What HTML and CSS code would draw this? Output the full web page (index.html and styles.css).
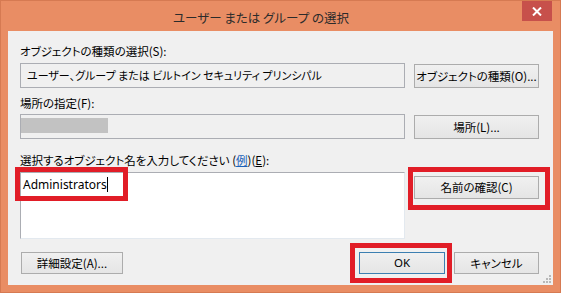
FILE: index.html
```html
<!DOCTYPE html>
<html>
<head>
<meta charset="utf-8">
<link rel="stylesheet" href="styles.css">
</head>
<body>
<div class="window">
    <div class="titlebar">
        <div class="title">ユーザー または グループ の選択</div>
        <div class="close">
            <svg width="10" height="9" viewBox="0 0 10 9"><path d="M1 0.5 L9 8.5 M9 0.5 L1 8.5" stroke="#fff" stroke-width="2"/></svg>
        </div>
    </div>
    <div class="client">
        <div class="label">オブジェクトの種類の選択(S):</div>
        <div class="row">
            <div class="textbox readonly">ユーザー、グループ または ビルトイン セキュリティ プリンシパル</div>
            <div class="btn wide">オブジェクトの種類(O)...</div>
        </div>

        <div class="label second">場所の指定(F):</div>
        <div class="row">
            <div class="textbox readonly"><span class="masked"></span></div>
            <div class="btn wide">場所(L)...</div>
        </div>

        <div class="label third">選択するオブジェクト名を入力してください (<a class="link">例</a>)(<u>E</u>):</div>
        <div class="row">
            <div class="textbox entry">Administrators<span class="caret"></span></div>
            <div class="btn wide check">名前の確認(C)</div>
        </div>

        <div class="footer">
            <div class="btn advanced">詳細設定(A)...</div>
            <div class="spacer"></div>
            <div class="btn ok">OK</div>
            <div class="btn cancel">キャンセル</div>
        </div>

        <svg class="grip" width="8" height="8" viewBox="0 0 8 8">
            <rect x="6" y="0" width="2" height="2" fill="#b8b8b8"/>
            <rect x="3" y="3" width="2" height="2" fill="#b8b8b8"/>
            <rect x="6" y="3" width="2" height="2" fill="#b8b8b8"/>
            <rect x="0" y="6" width="2" height="2" fill="#b8b8b8"/>
            <rect x="3" y="6" width="2" height="2" fill="#b8b8b8"/>
            <rect x="6" y="6" width="2" height="2" fill="#b8b8b8"/>
        </svg>

        <!-- annotation boxes -->
        <div class="mark mark-name"></div>
        <div class="mark mark-check"></div>
        <div class="mark mark-ok"></div>
    </div>
</div>
</body>
</html>
```

FILE: styles.css
```css
body {
    margin: 0;
    font-family: "Noto Sans CJK JP", "Noto Sans", sans-serif;
    font-size: 11.5px;
    font-feature-settings: "palt";
    color: #000;
}

.window {
    width: 561px;
    height: 293px;
    box-sizing: border-box;
    background: #e98d64;
    border: 1px solid #d67a52;
    padding: 0 7px 7px 7px;
    display: flex;
    flex-direction: column;
}

.titlebar {
    height: 30px;
    display: flex;
    position: relative;
}

.title {
    flex: 1;
    text-align: center;
    padding-top: 7px;
    padding-right: 8px;
    font-size: 12.5px;
    color: #2b2b2b;
}

.close {
    width: 30px;
    height: 20px;
    background: #c7504b;
    display: flex;
    align-items: center;
    justify-content: center;
    margin-right: 1px;
}

.client {
    flex: 1;
    background: #f0f0f0;
    padding: 13px 14px 0 12px;
    position: relative;
}

u {
    text-decoration: underline;
}

.label {
    height: 14px;
    line-height: 14px;
    margin-bottom: 5px;
}
.label.second {
    margin-top: 8px;
    margin-bottom: 4px;
}
.label.third {
    margin-top: 14px;
    margin-bottom: 5px;
}

.link {
    color: #1c62b9;
    text-decoration: underline;
}

.row {
    display: flex;
    gap: 9px;
    align-items: flex-start;
}

.textbox {
    width: 385px;
    height: 25px;
    box-sizing: border-box;
    border: 1px solid #abadb3;
    padding: 0 6px;
    line-height: 23px;
    white-space: nowrap;
}
.textbox.readonly {
    background: #f0f0f0;
    font-size: 11px;
}
.textbox.entry {
    background: #fff;
    height: 67px;
    padding: 3px 2px;
    line-height: 17px;
    font-family: "Noto Sans", sans-serif;
    font-size: 12px;
    border-color: #abadb3 #e3e9ef #e3e9ef #abadb3;
}

.masked {
    display: inline-block;
    width: 87px;
    height: 15px;
    margin-left: -6px;
    margin-top: 3px;
    vertical-align: top;
    background: #c2c2c2;
}

.caret {
    display: inline-block;
    width: 1px;
    height: 15px;
    background: #000;
    vertical-align: -3px;
}

.btn {
    box-sizing: border-box;
    height: 24px;
    border: 1px solid #acacac;
    background: linear-gradient(#f0f0f0, #e5e5e5);
    text-align: center;
    line-height: 22px;
    white-space: nowrap;
}
.btn.wide {
    width: 125px;
    margin-top: 1px;
}
.btn.check {
    margin-top: 4px;
    height: 23px;
    line-height: 21px;
}

.footer {
    display: flex;
    margin-top: 13px;
    gap: 9px;
}
.footer .btn {
    height: 22px;
    line-height: 20px;
}
.spacer {
    flex: 1;
}
.btn.advanced {
    width: 102px;
    margin-left: 1px;
}
.btn.ok {
    width: 86px;
    border-color: #3c7fb1;
    font-family: "Noto Sans", sans-serif;
}
.btn.cancel {
    width: 85px;
}

.grip {
    position: absolute;
    right: 2px;
    bottom: 2px;
}

.mark {
    position: absolute;
    border: 5px solid #e11d27;
    box-sizing: border-box;
}
.mark-name {
    left: 7px;
    top: 136px;
    width: 113px;
    height: 34px;
}
.mark-check {
    left: 400px;
    top: 136px;
    width: 142px;
    height: 43px;
}
.mark-ok {
    left: 342px;
    top: 212px;
    width: 102px;
    height: 40px;
}
```
